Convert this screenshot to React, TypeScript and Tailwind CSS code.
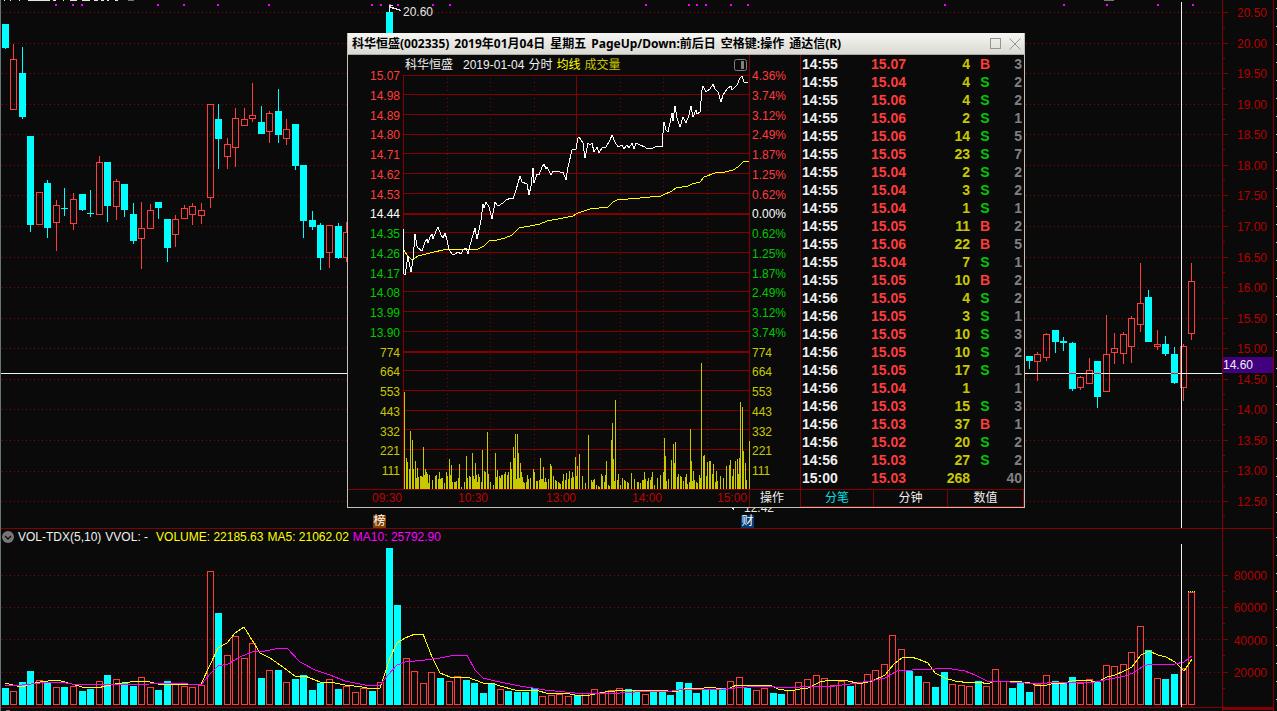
import React from "react";

type Candle = [number, number, number, number, number, number];

// index, high, body top, body bottom, low, up (1) or down (0)
const CANDLES: Candle[] = [
  [0, 24, 24, 48, 49, 0], [1, 44, 59, 110, 110, 1], [2, 47, 73, 117, 119, 0], [3, 136, 136, 225, 232, 0],
  [4, 192, 192, 225, 225, 1], [5, 180, 183, 228, 238, 0], [6, 200, 205, 223, 251, 1], [7, 188, 208, 209, 216, 0],
  [8, 193, 199, 224, 230, 1], [9, 194, 194, 210, 211, 0], [10, 190, 213, 214, 217, 0], [11, 156, 162, 215, 215, 1],
  [12, 162, 162, 206, 222, 0], [13, 179, 181, 207, 220, 1], [14, 184, 184, 210, 217, 0], [15, 203, 214, 241, 244, 0],
  [16, 202, 228, 239, 269, 1], [17, 204, 210, 229, 229, 1], [18, 202, 202, 208, 219, 0], [19, 219, 219, 248, 262, 0],
  [20, 215, 219, 235, 247, 1], [21, 205, 208, 219, 219, 1], [22, 203, 206, 215, 225, 1], [23, 203, 210, 216, 224, 1],
  [24, 104, 104, 198, 208, 1], [25, 104, 119, 139, 169, 0], [26, 138, 144, 157, 169, 1], [27, 108, 118, 148, 167, 1],
  [28, 108, 119, 126, 126, 1], [29, 83, 115, 119, 122, 1], [30, 106, 122, 134, 134, 0], [31, 111, 113, 132, 143, 1],
  [32, 89, 111, 135, 143, 0], [33, 119, 129, 139, 145, 1], [34, 124, 124, 166, 170, 0], [35, 165, 165, 221, 238, 0],
  [36, 211, 220, 227, 230, 0], [37, 223, 225, 258, 270, 0], [38, 225, 225, 253, 268, 1], [39, 223, 226, 258, 259, 0],
  [40, 222, 232, 258, 262, 1], [45, 8, 12, 120, 130, 0],
  [120, 356, 356, 361, 369, 0], [121, 352, 354, 362, 381, 1], [122, 333, 334, 358, 361, 1], [123, 330, 330, 342, 353, 0],
  [124, 337, 341, 343, 351, 0], [125, 342, 343, 389, 391, 0], [126, 376, 377, 388, 390, 1], [127, 358, 370, 384, 384, 1],
  [128, 361, 361, 397, 408, 0], [129, 315, 354, 392, 392, 1], [130, 333, 348, 353, 364, 1], [131, 332, 334, 354, 364, 1],
  [132, 316, 318, 347, 363, 1], [133, 263, 303, 325, 332, 1], [134, 290, 297, 342, 342, 0], [135, 330, 344, 347, 350, 1],
  [136, 336, 344, 354, 356, 0], [137, 347, 354, 383, 384, 0], [138, 344, 346, 388, 401, 1], [139, 263, 281, 334, 340, 1],
];

const VOLUME_TOPS = [
  688, 691, 682, 671, 680, 682, 687, 687, 686, 691, 689, 681, 675, 679, 683, 686, 677, 687, 690, 681,
  684, 686, 687, 685, 571, 613, 655, 636, 658, 643, 678, 670, 670, 682, 679, 675, 690, 683, 679, 689,
  686, 692, 688, 691, 682, 548, 605, 658, 671, 683, 672, 678, 681, 676, 680, 683, 693, 684, 689, 691,
  692, 692, 688, 696, 695, 694, 696, 695, 693, 689, 692, 690, 688, 689, 691, 694, 691, 691, 695, 682,
  683, 693, 689, 690, 688, 681, 677, 688, 690, 688, 693, 694, 690, 682, 679, 675, 678, 685, 681, 686,
  683, 674, 670, 664, 635, 649, 671, 676, 682, 687, 672, 684, 685, 686, 681, 686, 669, 681, 688, 683,
  692, 684, 675, 681, 683, 677, 683, 679, 682, 665, 666, 664, 652, 626, 650, 678, 679, 674, 668, 592,
];
const DOWN = new Set([
  0, 2, 3, 5, 7, 9, 10, 12, 14, 15, 18, 19, 25, 30, 32, 34, 35, 36, 37, 39, 43, 45, 46, 51, 54, 55, 56, 57, 59, 60,
  61, 62, 67, 73, 74, 76, 77, 78, 79, 80, 81, 82, 83, 84, 87, 90, 91, 99, 106, 107, 109, 110, 114, 118, 119, 120,
  123, 124, 125, 128, 134, 136, 137,
]);

const MA5 =
  "5,683 13,685 22,687 30,684 40,682 57,680 65,682 82,687 97,688 115,684 130,682 142,681 150,682 158,684 170,684 185,685 201,684 210,665 218,648 227,643 235,633 244,627 252,640 260,653 270,658 280,665 295,676 305,676 320,682 330,682 345,685 362,687 372,689 380,688 390,658 397,643 405,638 415,634 423,634 432,657 440,673 450,677 459,678 467,677 475,680 483,683 492,683 500,686 515,690 535,690 550,694 565,693 575,695 590,695 605,692 625,690 660,690 675,692 687,688 697,689 712,687 725,690 737,685 770,685 778,689 790,691 800,689 808,688 820,682 830,680 848,681 857,683 863,683 872,681 885,675 894,664 902,658 911,657 918,659 928,663 935,673 945,678 955,681 970,683 980,682 987,684 995,681 1013,681 1030,683 1038,686 1047,685 1055,683 1065,683 1075,680 1085,680 1098,682 1107,677 1115,675 1124,671 1132,667 1141,655 1149,651 1158,655 1166,657 1175,662 1184,671 1192,659";
const MA10 =
  "5,685 22,685 40,683 60,682 72,684 95,685 150,684 175,683 201,685 210,674 218,666 228,664 240,657 252,652 265,651 280,648 287,648 300,662 315,670 330,675 345,681 365,685 380,685 388,675 397,665 405,662 425,660 440,658 455,655 467,655 475,670 483,678 495,681 520,686 545,690 575,693 620,693 650,691 672,691 687,689 720,690 735,688 760,686 790,688 810,686 835,686 850,684 870,681 885,678 897,671 912,670 935,669 945,668 965,671 975,675 987,681 1010,682 1040,684 1055,682 1075,682 1090,683 1110,679 1125,676 1133,673 1142,667 1149,664 1175,664 1184,662 1192,656";

const PRICE_GRID = [12, 43, 73, 104, 134, 165, 195, 226, 257, 287, 318, 348, 379, 409, 440, 471, 501];
const PRICE_LABELS = ["20.50", "20.00", "19.50", "19.00", "18.50", "18.00", "17.50", "17.00", "16.50", "16.00", "15.50", "15.00", "14.50", "14.00", "13.50", "13.00", "12.50"];
const VOLUME_GRID = [575, 607, 639, 672];
const SIGNALS = [55, 72, 81, 157, 183, 217, 268, 371, 380, 389, 397, 432, 449, 645, 688, 696, 705, 730, 747, 944, 1063, 1106, 1157, 1192];

const INTRADAY_GRID = [75, 94, 114, 134, 153, 173, 193, 213, 232, 252, 272, 291, 311, 331, 351, 370, 390, 410, 429, 449, 469, 489];
const INTRADAY_PRICE =
  "403,228 404,274 405,275 408,256 409,262 411,272 413,260 415,234 417,246 418,248 422,251 425,242 427,239 428,243 430,237 432,234 433,239 436,231 438,227 441,235 443,238 445,233 447,240 449,249 452,254 455,254 458,252 461,254 463,250 466,248 468,254 470,245 473,235 475,228 477,239 479,230 481,220 483,204 484,208 486,202 489,207 492,219 495,202 498,206 503,203 506,200 511,198 513,199 516,190 520,176 522,182 527,184 529,195 531,186 533,168 534,183 537,174 539,175 542,167 544,164 546,169 547,167 549,171 551,175 553,171 560,172 563,172 566,180 568,167 572,150 576,149 578,138 579,137 583,143 585,158 588,143 590,145 592,143 594,152 597,147 599,153 602,148 606,147 610,140 612,135 615,142 618,147 622,145 624,149 627,145 629,148 632,143 634,149 636,143 640,145 645,147 647,149 653,148 657,146 662,147 663,133 664,122 666,130 668,132 670,123 672,113 673,121 675,106 677,118 680,127 683,117 686,123 689,115 691,106 693,117 696,110 697,114 700,112 702,90 703,86 706,92 710,89 713,84 715,89 718,92 721,102 723,95 727,89 731,86 732,90 737,85 740,78 742,76 744,82 748,83";
const INTRADAY_AVG =
  "403,249 407,255 411,259 414,259 418,256 430,253 447,249 478,249 484,246 489,241 497,240 505,238 512,235 519,228 530,226 540,224 547,221 563,218 573,216 578,213 590,209 608,207 613,202 617,200 640,198 661,196 672,191 676,188 688,186 692,184 700,182 704,177 715,173 725,172 733,170 738,167 744,161 749,161";

// x position and top of each one-minute volume bar
const MINUTE_PEAKS: [number, number][] = [
  [404, 392], [406, 458], [407, 462], [409, 469], [410, 431], [412, 440], [413, 469], [415, 461], [416, 478], [417, 468],
  [420, 476], [422, 477], [423, 447], [425, 469], [426, 472], [428, 483], [429, 475], [432, 480], [435, 476], [436, 475],
  [439, 472], [440, 479], [442, 478], [446, 472], [449, 459], [451, 465], [452, 482], [456, 481], [458, 478], [459, 464],
  [464, 482], [466, 456], [469, 476], [472, 453], [474, 479], [475, 463], [479, 477], [482, 450], [484, 471], [485, 472],
  [487, 432], [488, 474], [490, 482], [495, 453], [497, 470], [500, 478], [502, 475], [505, 472], [507, 475], [508, 472],
  [510, 462], [511, 469], [513, 447], [514, 458], [515, 434], [517, 434], [518, 453], [520, 463], [521, 472], [526, 482],
  [528, 479], [530, 478], [533, 469], [534, 472], [537, 481], [540, 458], [541, 479], [543, 467], [544, 482], [548, 479],
  [550, 464], [551, 466], [553, 476], [563, 474], [566, 473], [569, 471], [572, 472], [575, 457], [577, 466], [579, 454],
  [582, 476], [585, 483], [588, 435], [592, 482], [593, 480], [596, 485], [601, 474], [606, 461], [611, 440], [612, 423],
  [613, 459], [615, 400], [618, 474], [622, 478], [631, 473], [634, 479], [638, 482], [642, 480], [644, 472], [647, 481],
  [650, 480], [652, 472], [657, 478], [660, 475], [663, 472], [664, 438], [665, 456], [668, 479], [671, 460], [673, 444],
  [674, 463], [675, 442], [678, 474], [681, 477], [685, 477], [690, 429], [691, 461], [693, 471], [699, 475], [701, 363],
  [703, 456], [704, 455], [707, 462], [709, 461], [710, 461], [713, 464], [716, 471], [720, 476], [723, 478], [726, 466],
  [729, 465], [730, 460], [733, 469], [735, 461], [737, 459], [739, 458], [740, 402], [742, 407], [743, 451], [745, 463],
  [749, 441],
];

function minuteBars(): [number, number][] {
  const bars = [...MINUTE_PEAKS];
  const used = new Set(MINUTE_PEAKS.map(([x]) => x));
  for (let m = 0; m < 240; m++) {
    const x = Math.floor(404 + m * 1.44);
    if (!used.has(x) && !used.has(x - 1) && !used.has(x + 1)) bars.push([x, 487 - ((m * 7) % 8)]);
    else if (!used.has(x) && m % 2 === 0) bars.push([x, 482 - ((m * 5) % 9)]);
  }
  return bars;
}
const MINUTES = minuteBars();

const LEFT_LABELS = ["15.07", "14.98", "14.89", "14.80", "14.71", "14.62", "14.53", "14.44", "14.35", "14.26", "14.17", "14.08", "13.99", "13.90", "774", "664", "553", "443", "332", "221", "111"];
const RIGHT_LABELS = ["4.36%", "3.74%", "3.12%", "2.49%", "1.87%", "1.25%", "0.62%", "0.00%", "0.62%", "1.25%", "1.87%", "2.49%", "3.12%", "3.74%", "774", "664", "553", "443", "332", "221", "111"];

const TICKS: [string, string, string, string, string][] = [
  ["14:55", "15.07", "4", "B", "3"], ["14:55", "15.04", "4", "S", "2"], ["14:55", "15.06", "4", "S", "2"],
  ["14:55", "15.06", "2", "S", "1"], ["14:55", "15.06", "14", "S", "5"], ["14:55", "15.05", "23", "S", "7"],
  ["14:55", "15.04", "2", "S", "2"], ["14:55", "15.04", "3", "S", "2"], ["14:55", "15.04", "1", "S", "1"],
  ["14:55", "15.05", "11", "B", "2"], ["14:55", "15.06", "22", "B", "5"], ["14:55", "15.04", "7", "S", "1"],
  ["14:55", "15.05", "10", "B", "2"], ["14:56", "15.05", "4", "S", "2"], ["14:56", "15.05", "3", "S", "1"],
  ["14:56", "15.05", "10", "S", "3"], ["14:56", "15.05", "10", "S", "2"], ["14:56", "15.05", "17", "S", "1"],
  ["14:56", "15.04", "1", "", "1"], ["14:56", "15.03", "15", "S", "3"], ["14:56", "15.03", "37", "B", "1"],
  ["14:56", "15.02", "20", "S", "2"], ["14:56", "15.03", "27", "S", "2"], ["15:00", "15.03", "268", "", "40"],
];

const TITLE_PARTS = ["科华恒盛(002335)", "2019年01月04日", "星期五", "PageUp/Down:前后日", "空格键:操作", "通达信(R)"];

const barX = (i: number) => Math.floor(2.2 + 8.535 * i);

function labelColor(i: number) {
  if (i < 7) return "text-[#ff3c3c]";
  if (i === 7) return "text-white";
  if (i < 14) return "text-[#00c800]";
  return "text-[#c8c800]";
}

function HDots({ y, width }: { y: number; width: number }) {
  return <line x1={2} x2={width} y1={y + 0.5} y2={y + 0.5} stroke="#960000" strokeDasharray="1 3" />;
}

function Bar({ x, top, bottom, up }: { x: number; top: number; bottom: number; up: boolean }) {
  return up ? (
    <rect x={x + 0.5} y={top + 0.5} width={6} height={Math.max(bottom - top - 1, 1)} fill="none" stroke="#ff3c3c" />
  ) : (
    <rect x={x} y={top} width={7} height={bottom - top} fill="#00ffff" />
  );
}

function PriceChart() {
  return (
    <svg className="block h-full min-w-0 flex-1" viewBox="0 0 1222 528" preserveAspectRatio="none" shapeRendering="crispEdges" aria-label="日线">
      {PRICE_GRID.map((y) => <HDots key={y} y={y} width={1222} />)}
      {SIGNALS.map((x) => <rect key={x} x={x} y={4} width={2} height={2} fill="#ff00ff" />)}
      {CANDLES.map(([i, high, top, bottom, low, up]) => {
        const x = barX(i);
        const c = up ? "#ff3c3c" : "#00ffff";
        return (
          <g key={i}>
            <rect x={x + 3} y={high} width={1} height={top - high} fill={c} />
            <rect x={x + 3} y={bottom} width={1} height={low - bottom} fill={c} />
            <Bar x={x} top={top} bottom={bottom} up={up === 1} />
          </g>
        );
      })}
      <rect x={0} y={373} width={1222} height={1} fill="#f0f0f0" />
      {[125, 128, 137].map((i) => <rect key={i} x={barX(i)} y={373} width={7} height={1} fill="#ff1414" />)}
      <rect x={1181} y={2} width={1} height={526} fill="#f0f0f0" />
      <path d="M389.5 12V5.500H393M390 6.500L393 9M392 7.500L401 10.500" fill="none" stroke="#e6e6e6" />
      <path d="M731 507l3 2.500" stroke="#e6e6e6" />
      <path d="M4 0h1M10 0h1M19 0h1M28 0h22M53 0h3M63 0h1M70 0h7M82 0h8M94 0h4M101 0h3M107 0h2M115 0h3" stroke="#e6e6e6" strokeWidth={1.500} />
      <path d="M128 0h6M1104 0h10" stroke="#777" strokeWidth={2} />
      <rect x={0} y={0} width={1} height={528} fill="#65757a" />
    </svg>
  );
}

function PriceAxis() {
  return (
    <aside className="relative flex h-full w-[55px] shrink-0">
      <svg className="absolute inset-0 h-full w-full" viewBox="0 0 55 528" preserveAspectRatio="none" shapeRendering="crispEdges">
        <path d="M.5 0V528M51.500 0V528" stroke="#820000" />
        {PRICE_GRID.map((y) => (
          <path key={y} d={`M0 ${y + 0.5}h6M0 ${y + 15.5}h3`} stroke="#820000" />
        ))}
        <path d="M54.500 8V528" stroke="#cfcfcf" strokeDasharray="1 17" />
      </svg>
      <div className="flex flex-1 flex-col justify-between pt-[7px] pr-2.5 pb-5 text-right leading-3 text-[#b40000]">
        {PRICE_LABELS.map((t) => <span key={t}>{t}</span>)}
      </div>
      <div className="absolute top-[67.6%] left-px flex h-4 w-[50px] items-center bg-[#400080] text-[#f0f0f0]">14.60</div>
    </aside>
  );
}

function VolumeChart() {
  return (
    <svg className="block h-full min-w-0 flex-1" viewBox="0 528 1222 183" preserveAspectRatio="none" shapeRendering="crispEdges" aria-label="成交量">
      {VOLUME_GRID.map((y) => <HDots key={y} y={y} width={1222} />)}
      {VOLUME_TOPS.map((top, i) => <Bar key={i} x={barX(i)} top={top} bottom={705} up={!DOWN.has(i)} />)}
      <path d="M1188 591.500h7" stroke="#ffff00" strokeDasharray="1 1" />
      <polyline points={MA5} fill="none" stroke="#ffff00" />
      <polyline points={MA10} fill="none" stroke="#ff00ff" />
      <rect x={1181} y={544} width={1} height={163} fill="#f0f0f0" />
      <rect x={0} y={528} width={1222} height={1} fill="#820000" />
      <rect x={0} y={707} width={1222} height={1} fill="#820000" />
      <rect x={0} y={528} width={1} height={183} fill="#65757a" />
      <circle cx={8} cy={716} r={6} fill="#777" />
    </svg>
  );
}

function VolumeAxis() {
  return (
    <aside className="relative flex h-full w-[55px] shrink-0">
      <svg className="absolute inset-0 h-full w-full" viewBox="0 528 55 183" preserveAspectRatio="none" shapeRendering="crispEdges">
        <path d="M.5 528V711M51.500 528V711M0 528.500H51M0 707.500H51" stroke="#820000" />
        <path d="M1 709h50" stroke="#820000" strokeWidth={2} />
        {VOLUME_GRID.map((y) => (
          <path key={y} d={`M0 ${y + 0.5}h6M0 ${y + 16.5}h3`} stroke="#820000" />
        ))}
        <path d="M54.500 537V711" stroke="#cfcfcf" strokeDasharray="1 17" />
      </svg>
      <div className="flex flex-1 flex-col justify-between pt-[42px] pr-2.5 pb-8 text-right leading-3 text-[#b40000]">
        {["80000", "60000", "40000", "20000"].map((t) => <span key={t}>{t}</span>)}
      </div>
    </aside>
  );
}

function IntradayChart() {
  return (
    <svg className="block h-full w-full" viewBox="403 75 347 415" preserveAspectRatio="none" shapeRendering="crispEdges" aria-label="分时走势">
      {INTRADAY_GRID.map((y) => (
        <rect key={y} x={403} y={y} width={347} height={y === 213 || y === 351 ? 2 : 1} fill="#820000" />
      ))}
      {[447, 490, 534, 620, 663, 707].map((x) => (
        <line key={x} x1={x + 0.5} x2={x + 0.5} y1={78} y2={489} stroke="#820000" strokeDasharray="1 3" />
      ))}
      <path d="M403.500 75V490M576.500 75V490M749.500 75V490" stroke="#820000" />
      {MINUTES.map(([x, top], k) => <rect key={k} x={x} y={top} width={1} height={489 - top} fill="#c8c800" />)}
      <polyline points={INTRADAY_AVG} fill="none" stroke="#ffff00" />
      <polyline points={INTRADAY_PRICE} fill="none" stroke="#ffffff" />
    </svg>
  );
}

function TickTable() {
  return (
    <table className="w-full table-fixed border-collapse text-sm font-bold">
      <colgroup>
        <col className="w-[70px]" />
        <col className="w-[50px]" />
        <col className="w-[49px]" />
        <col className="w-[30px]" />
        <col />
      </colgroup>
      <tbody>
        {TICKS.map(([time, price, volume, side, count], i) => (
          <tr key={i} className="h-[18px] leading-[18px]">
            <td className="p-0 pl-px text-[#f0f0f0]">{time}</td>
            <td className="p-0 text-[#ff3c3c]">{price}</td>
            <td className="p-0 text-right text-[#c8c800]">{volume}</td>
            <td className={side === "B" ? "p-0 text-center text-[#ff3c3c]" : "p-0 text-center text-[#00c800]"}>{side}</td>
            <td className="p-0 pr-0.5 text-right text-[#808080]">{count}</td>
          </tr>
        ))}
      </tbody>
    </table>
  );
}

function IntradayWindow() {
  return (
    <section className="absolute top-[33px] left-[347px] flex h-[475px] w-[678px] flex-col border-r border-b border-l border-[#c3c0b8] bg-[#0a0a0a]">
      <header className="flex h-[22px] shrink-0 items-center justify-between border-b border-[#aaa9a2] bg-linear-to-b from-[#f6f6f4] to-[#dad9d2] pr-[3px] pl-1 text-black">
        <h1 className="flex gap-[5px] font-['Noto_Sans','Noto_Sans_CJK_SC',sans-serif] text-xs font-bold whitespace-nowrap">
          {TITLE_PARTS.map((part) => <span key={part}>{part}</span>)}
        </h1>
        <div className="flex items-center gap-2">
          <button type="button" aria-label="最大化" className="size-[11px] border border-[#959595]" />
          <button type="button" aria-label="关闭" className="size-3">
            <svg viewBox="0 0 12 12" className="block size-3">
              <path d="M.5 .5l11 11M11.500 .5l-11 11" stroke="#959595" />
            </svg>
          </button>
        </div>
      </header>
      <div className="flex min-h-0 flex-1">
        <div className="grid min-w-0 flex-1 grid-cols-[55px_1fr_50px] grid-rows-[20px_1fr_17px]">
          <div />
          <div className="flex items-center justify-between pr-[3px] pl-0.5 text-[#f0f0f0]">
            <div className="flex items-center gap-1">
              <span className="mr-1.5">科华恒盛</span>
              <span>2019-01-04</span>
              <span>分时</span>
              <span className="text-[#ffff00]">均线</span>
              <span className="text-[#c8c800]">成交量</span>
            </div>
            <button type="button" aria-label="侧栏">
              <svg width="13" height="12" viewBox="0 0 13 12" className="block">
                <rect x=".5" y=".5" width="12" height="11" rx="2" fill="none" stroke="#808080" />
                <rect x="7" y="2" width="3" height="8" fill="#808080" />
              </svg>
            </button>
          </div>
          <div className="-ml-px border-l border-[#820000]" />
          <div className="-mt-[5px] flex flex-col justify-between pr-[3px] pb-[13px] text-right leading-3">
            {LEFT_LABELS.map((t, i) => <span key={i} className={labelColor(i)}>{t}</span>)}
          </div>
          <IntradayChart />
          <div className="-mt-[5px] flex flex-col justify-between pb-[13px] pl-0.5 leading-3">
            {RIGHT_LABELS.map((t, i) => <span key={i} className={labelColor(i)}>{t}</span>)}
          </div>
          <div className="col-span-2 flex items-center pb-0.5 pl-6 text-[#c00000] shadow-[0_-1px_0_#820000]">
            <span className="w-[86px]">09:30</span>
            <span className="w-[88px]">10:30</span>
            <span className="w-[86px]">13:00</span>
            <span className="w-[85px]">14:00</span>
            <span>15:00</span>
          </div>
          <button type="button" className="-ml-px flex items-center justify-center border-l border-[#820000] pr-1.5 pb-0.5 text-[#f0f0f0] shadow-[0_-1px_0_#820000]">操作</button>
        </div>
        <div className="flex w-[224px] shrink-0 flex-col justify-between border-l border-[#820000]">
          <TickTable />
          <nav className="grid h-[18px] grid-cols-[72px_74px_1fr] border-y border-r border-[#820000] text-[#f0f0f0]">
            <button type="button" className="leading-4 text-[#00e0e0]">分笔</button>
            <button type="button" className="border-l border-[#820000] leading-4">分钟</button>
            <button type="button" className="border-l border-[#820000] leading-4">数值</button>
          </nav>
        </div>
      </div>
    </section>
  );
}

export default function App() {
  return (
    <main className="grid h-screen min-h-[560px] grid-rows-[528fr_183fr] overflow-hidden bg-[#0a0a0a] font-['Liberation_Sans','Noto_Sans_CJK_SC',sans-serif] text-xs">
      <section className="relative flex min-h-0">
        <PriceChart />
        <PriceAxis />
        <span className="absolute top-1 left-[403px] leading-4 text-[#e6e6e6]">20.60</span>
        <span className="absolute top-[502px] left-[744px] leading-3 text-[#e6e6e6]">12.42</span>
        <span className="absolute bottom-0 left-[373px] size-[13px] bg-[#804000] text-center leading-[13px] text-white">榜</span>
        <span className="absolute bottom-0 left-[741px] size-[13px] bg-[#003c78] text-center leading-[13px] text-white">财</span>
        <IntradayWindow />
      </section>
      <section className="relative flex min-h-0">
        <VolumeChart />
        <VolumeAxis />
        <div className="absolute top-0.5 left-0.5 flex h-[14px] items-center whitespace-pre text-[#f0f0f0]">
          <svg width="12" height="12" viewBox="0 0 12 12" className="mr-1 block">
            <circle cx="6" cy="6" r="6" fill="#777" />
            <path d="M3 5l3 3 3-3" fill="none" stroke="#111" strokeWidth="1.500" />
          </svg>
          <span className="mr-1">VOL-TDX(5,10)</span>
          <span className="mr-2">VVOL: -</span>
          <span className="mr-1 text-[#ffff00]">VOLUME: 22185.63</span>
          <span className="mr-1 text-[#ffff00]">MA5: 21062.02</span>
          <span className="text-[#ff00ff]">MA10: 25792.90</span>
        </div>
      </section>
    </main>
  );
}
